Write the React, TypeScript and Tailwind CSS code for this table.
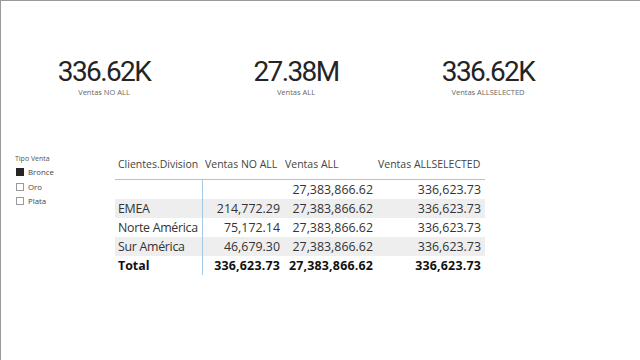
import React from "react";

const cards = [
  { value: "336.62K", label: "Ventas NO ALL" },
  { value: "27.38M", label: "Ventas ALL" },
  { value: "336.62K", label: "Ventas ALLSELECTED" },
];

const rows = [
  { name: "", a: "", b: "27,383,866.62", c: "336,623.73", band: false },
  { name: "EMEA", a: "214,772.29", b: "27,383,866.62", c: "336,623.73", band: true },
  { name: "Norte América", a: "75,172.14", b: "27,383,866.62", c: "336,623.73", band: false },
  { name: "Sur América", a: "46,679.30", b: "27,383,866.62", c: "336,623.73", band: true },
];

const slicer = [
  { label: "Bronce", checked: true },
  { label: "Oro", checked: false },
  { label: "Plata", checked: false },
];

export default function App() {
  return (
    <div className="w-[640px] h-[360px] bg-white border-t border-l border-[#9a9a9a] overflow-hidden font-['Open_Sans',sans-serif]">
      <div className="flex pl-[7px] pt-[57px]">
        {cards.map((c, i) => (
          <div key={i} className="w-[192px] flex flex-col items-center">
            <div className="font-['Roboto',sans-serif] text-[28px] leading-[28px] tracking-[-1.6px] text-[#252423]">
              {c.value}
            </div>
            <div className="mt-[1px] text-[7.5px] leading-[10px] text-[#666666]">{c.label}</div>
          </div>
        ))}
      </div>
      <div className="flex mt-[56px]">
        <div className="w-[114px] pl-[14px] pt-[1px]">
          <div className="text-[7px] leading-[10px] text-[#555555]">Tipo Venta</div>
          <div className="mt-[1px]">
            {slicer.map((s) => (
              <div key={s.label} className="h-[14.5px] flex items-center">
                <div
                  className={
                    s.checked
                      ? "ml-[1px] w-[8px] h-[8px] bg-[#252525] border border-[#252525]"
                      : "ml-[1px] w-[8px] h-[8px] bg-white border border-[#9a9a9a]"
                  }
                />
                <span className="ml-[4px] text-[7.8px] leading-[10px] text-[#444444]">{s.label}</span>
              </div>
            ))}
          </div>
        </div>
        <div className="w-[370px] text-[#333333]">
          <div className="flex h-[27px] border-b border-[#a3c8e8] text-[10.5px] text-[#444444]">
            <div className="w-[87px] pl-[3px] pb-[3px] flex items-center whitespace-nowrap">Clientes.Division</div>
            <div className="w-[80px] pl-[3px] pb-[3px] flex items-center whitespace-nowrap">Ventas NO ALL</div>
            <div className="w-[93px] pl-[3px] pb-[3px] flex items-center whitespace-nowrap">Ventas ALL</div>
            <div className="w-[110px] pl-[3px] pb-[3px] flex items-center whitespace-nowrap">Ventas ALLSELECTED</div>
          </div>
          {rows.map((r, i) => (
            <div
              key={i}
              className={
                r.band
                  ? "flex h-[19px] bg-[#eeeeee] text-[12.4px] leading-[19px]"
                  : "flex h-[19px] bg-white text-[12.4px] leading-[19px]"
              }
            >
              <div className="w-[87px] pl-[3px] whitespace-nowrap tracking-[-0.3px]">{r.name}</div>
              <div className="w-[80px] pr-[2px] text-right border-l border-[#a3c8e8]">{r.a}</div>
              <div className="w-[93px] pr-[2px] text-right">{r.b}</div>
              <div className="w-[110px] pr-[4px] text-right">{r.c}</div>
            </div>
          ))}
          <div className="flex h-[19px] text-[12.4px] leading-[19px] font-bold text-[#111111]">
            <div className="w-[87px] pl-[3px]">Total</div>
            <div className="w-[80px] pr-[2px] text-right border-l border-[#a3c8e8] tracking-[0.2px]">336,623.73</div>
            <div className="w-[93px] pr-[2px] text-right tracking-[0.2px]">27,383,866.62</div>
            <div className="w-[110px] pr-[4px] text-right tracking-[0.2px]">336,623.73</div>
          </div>
        </div>
      </div>
    </div>
  );
}
